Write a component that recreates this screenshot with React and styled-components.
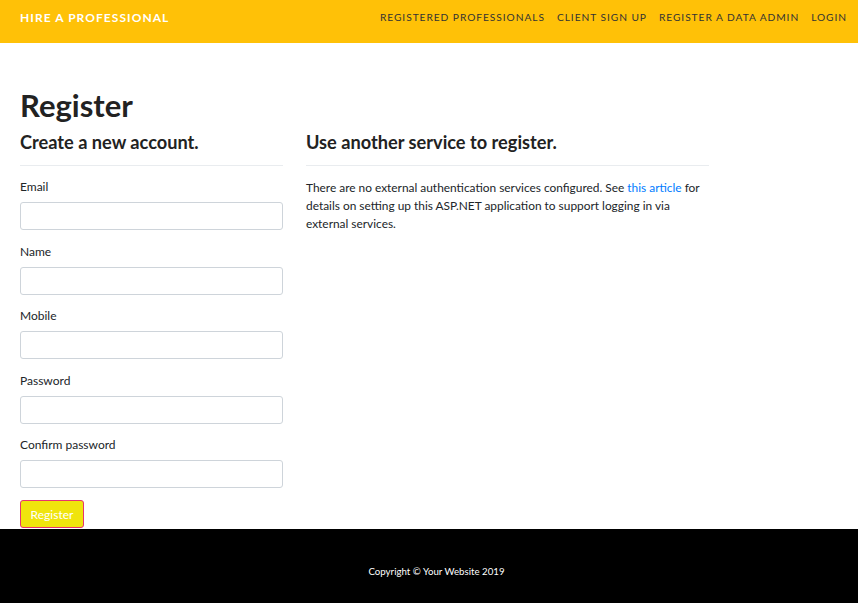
import React from "react";
import { createGlobalStyle, styled } from "styled-components";

const GlobalStyle = createGlobalStyle`
  html, body { margin: 0; padding: 0; }
  body {
    font-family: Lato, "Liberation Sans", sans-serif;
    color: #212529;
    background: #fff;
  }
  * { box-sizing: border-box; }
`;

const Page = styled.div`
  display: flex;
  flex-direction: column;
  min-height: 603px;
`;

const Navbar = styled.nav`
  height: 43px;
  background-color: #ffc107;
  display: flex;
  align-items: flex-start;
  justify-content: space-between;
  padding: 10px 11px 0 20px;
`;

const Brand = styled.a`
  color: #fff;
  font-weight: 700;
  font-size: 12px;
  line-height: 15px;
  letter-spacing: 1.05px;
  text-transform: uppercase;
  text-decoration: none;
`;

const NavList = styled.ul`
  display: flex;
  gap: 12px;
  list-style: none;
  margin: 0;
  padding: 0;
`;

const NavItem = styled.li`
  font-size: 10.2px;
  line-height: 15px;
`;

const NavLink = styled.a`
  display: block;
  color: #333;
  letter-spacing: 0.95px;
  text-transform: uppercase;
  text-decoration: none;
`;

const Main = styled.main`
  flex: 1;
  padding: 43px 20px 0;
`;

const Title = styled.h1`
  font-size: 31px;
  font-weight: 700;
  margin: 0 0 7px;
  line-height: 38px;
  color: #222;
`;

const Row = styled.div`
  display: grid;
  grid-template-columns: 263px 403px;
  column-gap: 23px;
`;

const SubTitle = styled.h4`
  font-size: 18.2px;
  font-weight: 700;
  margin: 0;
  line-height: 22px;
  color: #222;
`;

const Rule = styled.hr`
  border: 0;
  border-top: 1px solid #e9ecef;
  margin: 12px 0 13px;
`;

const Field = styled.div`
  display: flex;
  flex-direction: column;
  margin-bottom: 13.5px;
`;

const Label = styled.label`
  font-size: 12px;
  line-height: 16px;
  margin-bottom: 7px;
  color: #212529;
`;

const Input = styled.input`
  height: 28px;
  width: 100%;
  border: 1px solid #ced4da;
  border-radius: 3px;
  padding: 4px 8px;
  font-family: inherit;
  font-size: 12px;
`;

const Button = styled.button`
  height: 28px;
  width: 64px;
  background-color: #f0e40d;
  border: 1px solid #e8336f;
  border-radius: 3px;
  color: #fff;
  font-family: Lato, "Liberation Sans", sans-serif;
  font-size: 12px;
  padding: 0;
  margin-top: -1.5px;
`;

const Text = styled.p`
  font-size: 11.9px;
  line-height: 18px;
  margin: 0;
  color: #212529;
`;

const Link = styled.a`
  color: #007bff;
  text-decoration: none;
`;

const Footer = styled.footer`
  background: #000;
  height: 74px;
  display: flex;
  align-items: center;
  justify-content: center;
  padding-left: 15px;
`;

const FooterText = styled.p`
  color: #fff;
  font-size: 9.7px;
  margin: 10px 0 0;
`;

const fields = ["Email", "Name", "Mobile", "Password", "Confirm password"];
const links = ["Registered Professionals", "Client Sign Up", "Register a Data Admin", "Login"];

const App = () => {
  return (
    <>
      <GlobalStyle />
      <Page>
        <Navbar>
          <Brand href="#">Hire a Professional</Brand>
          <NavList>
            {links.map((l) => (
              <NavItem key={l}>
                <NavLink href="#">{l}</NavLink>
              </NavItem>
            ))}
          </NavList>
        </Navbar>
        <Main>
          <Title>Register</Title>
          <Row>
            <section>
              <SubTitle>Create a new account.</SubTitle>
              <Rule />
              {fields.map((f) => (
                <Field key={f}>
                  <Label>{f}</Label>
                  <Input type={f.toLowerCase().includes("password") ? "password" : "text"} />
                </Field>
              ))}
              <Button>Register</Button>
            </section>
            <section>
              <SubTitle>Use another service to register.</SubTitle>
              <Rule />
              <Text>
                There are no external authentication services configured. See{" "}
                <Link href="#">this article</Link> for details on setting up this
                ASP.NET application to support logging in via external services.
              </Text>
            </section>
          </Row>
        </Main>
        <Footer>
          <FooterText>Copyright © Your Website 2019</FooterText>
        </Footer>
      </Page>
    </>
  );
};

export default App;
